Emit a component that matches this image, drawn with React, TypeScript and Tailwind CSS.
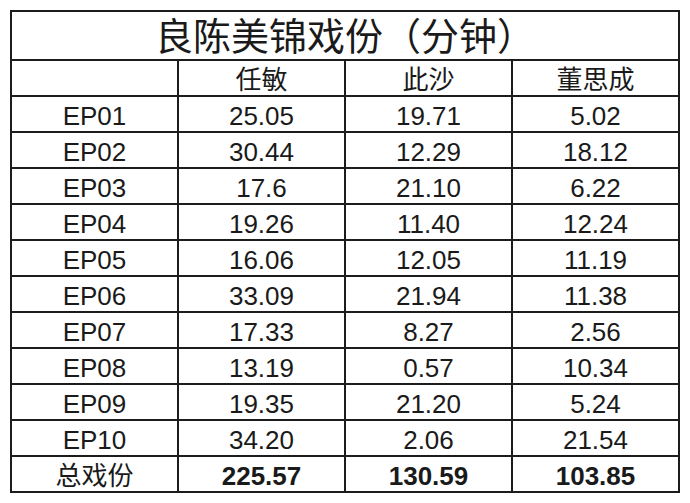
import React from "react";

const rows: [string, string, string, string][] = [
  ["EP01", "25.05", "19.71", "5.02"],
  ["EP02", "30.44", "12.29", "18.12"],
  ["EP03", "17.6", "21.10", "6.22"],
  ["EP04", "19.26", "11.40", "12.24"],
  ["EP05", "16.06", "12.05", "11.19"],
  ["EP06", "33.09", "21.94", "11.38"],
  ["EP07", "17.33", "8.27", "2.56"],
  ["EP08", "13.19", "0.57", "10.34"],
  ["EP09", "19.35", "21.20", "5.24"],
  ["EP10", "34.20", "2.06", "21.54"],
];

const font = "[font-family:'Liberation_Sans','Noto_Sans_CJK_SC',sans-serif]";

function Row({ cells, bold }: { cells: string[]; bold?: boolean }) {
  return (
    <div className="grid grid-cols-[165px_167px_167px_167px] h-[36px] border-t-2 border-[#1c1c1c]">
      {cells.map((c, i) => (
        <div
          key={i}
          className={
            "flex items-center justify-center pt-[3px] text-[26px] leading-none " +
            (i > 0 ? "border-l-2 border-[#1c1c1c] " : "") +
            (bold && i > 0 ? "font-bold" : "font-normal")
          }
        >
          {c}
        </div>
      ))}
    </div>
  );
}

export default function App() {
  return (
    <div className={`w-[690px] h-[503px] bg-white pt-[10px] pl-[10px] text-[#1a1a1a] ${font}`}>
      <div className="w-[670px] border-2 border-[#1c1c1c] flex flex-col">
        <div className="h-[47px] flex items-center justify-center text-[38px] leading-none pt-[2px]">
          良陈美锦戏份（分钟）
        </div>
        <Row cells={["", "任敏", "此沙", "董思成"]} />
        {rows.map((r) => (
          <Row key={r[0]} cells={r} />
        ))}
        <Row cells={["总戏份", "225.57", "130.59", "103.85"]} bold />
      </div>
    </div>
  );
}
